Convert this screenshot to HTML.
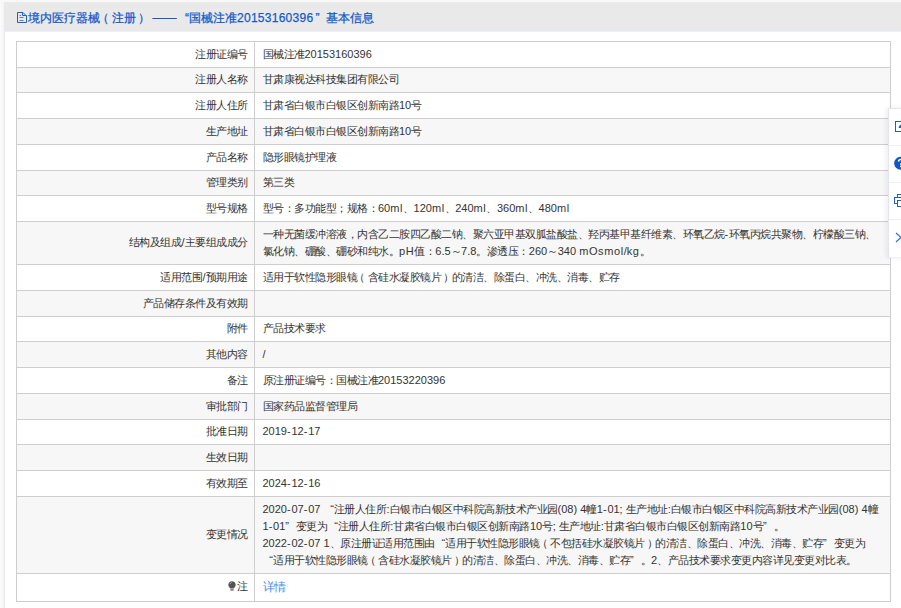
<!DOCTYPE html>
<html><head><meta charset="utf-8">
<style>
html,body{margin:0;padding:0;background:#f6f6f6;width:901px;height:608px;overflow:hidden;font-family:"Liberation Sans",sans-serif;}
i,b,u,s{font-style:normal;font-weight:normal;text-decoration:none;}
u{letter-spacing:0.8px;}
td s{letter-spacing:0.6px;}
#wrap{position:absolute;left:4px;top:2px;width:920px;height:640px;background:#fff;border-left:1px solid #e9e9e9;}
#lsh{position:absolute;left:0;top:0;width:4px;height:608px;background:linear-gradient(to right,#fbfbfb,#f4f4f4);}
#tsh{position:absolute;left:0;top:0;width:901px;height:2px;background:#f8f8f8;}
#hd{position:absolute;left:-1px;top:0;width:100%;height:29px;background:#e9e9e9;border-bottom:1px solid #eef0f7;}
#hd .t{position:absolute;left:24px;top:8.6px;font-size:12px;line-height:14px;color:#135ac9;white-space:nowrap;-webkit-text-stroke:0.25px #135ac9;}
#hd .t .lq{width:12px;}
#hd .t .rq{width:11px;padding-left:2px;}
#hd svg{position:absolute;left:13px;top:10px;}
#hd .t .dash{margin-left:4.5px;margin-right:0.5px;}
#hd .t i{letter-spacing:0.27px;}
table{position:absolute;left:16px;top:41px;border-collapse:collapse;table-layout:fixed;width:875px;font-size:11px;color:#333;letter-spacing:-0.5px;}
td{border:1px solid #cfcdd0;padding:0 7.5px;line-height:17.1px;white-space:nowrap;overflow:hidden;}
td i{letter-spacing:0;}
td.l{text-align:right;padding-right:6.5px;}
tr:nth-child(even) td{background:#f7f7f7;}
.lp{position:relative;left:-3px;}
.rp{position:relative;left:2px;}
.lq{display:inline-block;width:10.5px;text-align:right;letter-spacing:0;}
.rq{display:inline-block;width:10.5px;text-align:left;letter-spacing:0;}
tr.last{height:28px;}
#side{position:absolute;left:888px;top:108px;width:30px;height:148px;background:#fff;border-left:1px solid #e3e6ee;border-top:1px solid #e3e6ee;border-bottom:1px solid #eef0f4;box-shadow:-2px 0 5px rgba(0,0,0,0.07);}
#side .sep{position:absolute;left:0;width:100%;height:1px;background:#eceff4;}
a{color:#3d8ef0;text-decoration:none;font-size:12px;letter-spacing:-1px;}
.pin{display:inline-block;width:8px;height:10px;vertical-align:-1px;margin-right:1.5px;}
tr.last td.l{padding-top:2px;padding-bottom:4px;}
</style></head><body>
<div id="lsh"></div><div id="tsh"></div>
<div id="wrap">
 <div id="hd">
  <svg width="11" height="12" viewBox="0 0 11 12"><path d="M0.5 0.5H6L9.5 4V10.5H0.5Z" fill="none" stroke="#1f5fc2"/><path d="M5.5 0.5V3.5H9.5" fill="none" stroke="#1f5fc2"/><path d="M2.5 3.5H4M2.5 5.5H6.5M2.5 8.5H6.5" stroke="#5b7fd0"/></svg>
  <div class="t">境内医疗器械<b class="lp">（</b>注册<b class="rp">）</b><span class="dash">——</span><b class="lq">“</b>国械注准<i>20153160396</i><b class="rq">”</b>基本信息</div>
 </div>
</div>
<table>
<colgroup><col style="width:238px"><col></colgroup>
<tr style="height:26px"><td class="l">注册证编号</td><td>国械注准<i>20153160396</i></td></tr>
<tr style="height:25px"><td class="l">注册人名称</td><td>甘肃康视达科技集团有限公司</td></tr>
<tr style="height:26px"><td class="l">注册人住所</td><td>甘肃省白银市白银区创新南路<i>10</i>号</td></tr>
<tr style="height:26px"><td class="l">生产地址</td><td>甘肃省白银市白银区创新南路<i>10</i>号</td></tr>
<tr style="height:26px"><td class="l">产品名称</td><td>隐形眼镜护理液</td></tr>
<tr style="height:25px"><td class="l">管理类别</td><td>第三类</td></tr>
<tr style="height:26px"><td class="l">型号规格</td><td>型号：多功能型；规格：<i>60<s>ml</s></i>、<i>120<s>ml</s></i>、<i>240<s>ml</s></i>、<i>360<s>ml</s></i>、<i>480<s>ml</s></i></td></tr>
<tr style="height:43px"><td class="l">结构及组成<i>/</i>主要组成成分</td><td>一种无菌缓冲溶液，内含乙二胺四乙酸二钠、聚六亚甲基双胍盐酸盐、羟丙基甲基纤维素、环氧乙烷<i><u>-</u></i>环氧丙烷共聚物、柠檬酸三钠、<br>氯化钠、硼酸、硼砂和纯水。<i><s>pH</s></i>值：<i>6.5</i>～<i>7.8</i>。渗透压：<i>260</i>～<i>340 <s>mOsmol</s>/<s>kg</s></i>。</td></tr>
<tr style="height:26px"><td class="l">适用范围<i>/</i>预期用途</td><td>适用于软性隐形眼镜<b class="lp">（</b>含硅水凝胶镜片<b class="rp">）</b>的清洁、除蛋白、冲洗、消毒、贮存</td></tr>
<tr style="height:26px"><td class="l">产品储存条件及有效期</td><td></td></tr>
<tr style="height:25px"><td class="l">附件</td><td>产品技术要求</td></tr>
<tr style="height:26px"><td class="l">其他内容</td><td><i>/</i></td></tr>
<tr style="height:26px"><td class="l">备注</td><td>原注册证编号：国械注准<i>20153220396</i></td></tr>
<tr style="height:26px"><td class="l">审批部门</td><td>国家药品监督管理局</td></tr>
<tr style="height:25px"><td class="l">批准日期</td><td><i>2019<u>-</u>12<u>-</u>17</i></td></tr>
<tr style="height:26px"><td class="l">生效日期</td><td></td></tr>
<tr style="height:26px"><td class="l">有效期至</td><td><i>2024<u>-</u>12<u>-</u>16</i></td></tr>
<tr style="height:77px"><td class="l">变更情况</td><td><i>2020<u>-</u>07<u>-</u>07 </i><b class="lq">“</b>注册人住所<i>:</i>白银市白银区中科院高新技术产业园<i>(08) 4</i>幢<i>1<u>-</u>01; </i>生产地址<i>:</i>白银市白银区中科院高新技术产业园<i>(08) 4</i>幢<br><i>1<u>-</u>01</i><b class="rq">”</b>变更为<b class="lq">“</b>注册人住所<i>:</i>甘肃省白银市白银区创新南路<i>10</i>号<i>; </i>生产地址<i>:</i>甘肃省白银市白银区创新南路<i>10</i>号<b class="rq">”</b>。<br><i>2022<u>-</u>02<u>-</u>07 1</i>、原注册证适用范围由<b class="lq">“</b>适用于软性隐形眼镜<b class="lp">（</b>不包括硅水凝胶镜片<b class="rp">）</b>的清洁、除蛋白、冲洗、消毒、贮存<b class="rq">”</b>变更为<br><b class="lq">“</b>适用于软性隐形眼镜<b class="lp">（</b>含硅水凝胶镜片<b class="rp">）</b>的清洁、除蛋白、冲洗、消毒、贮存<b class="rq">”</b>。<i>2</i>、产品技术要求变更内容详见变更对比表。</td></tr>
<tr class="last"><td class="l"><svg class="pin" viewBox="0 0 8 10"><path d="M4 0.3C6.2 0.3 7.7 1.9 7.7 3.8C7.7 5.6 6.2 6.4 5.8 7.6H2.2C1.8 6.4 0.3 5.6 0.3 3.8C0.3 1.9 1.8 0.3 4 0.3Z" fill="#555"/><rect x="2.4" y="8.1" width="3.2" height="1.6" fill="#777"/><path d="M2.2 2.8Q2.5 1.7 3.6 1.5" stroke="#ccc" stroke-width="0.8" fill="none"/></svg>注</td><td><a>详情</a></td></tr>
</table>
<div id="side">
 <div class="sep" style="top:36px"></div><div class="sep" style="top:73px"></div><div class="sep" style="top:110px"></div>
</div>
<svg id="icons" width="20" height="160" viewBox="0 0 20 160" style="position:absolute;left:881px;top:100px">
 <rect x="14.5" y="21.5" width="10" height="10" fill="none" stroke="#1a5fd0"/>
 <path d="M17.6 27.8Q18 25.2 20.5 24.3L21 24.1V28H17.6Z" fill="#1a5fd0"/>
 <circle cx="19.6" cy="63.3" r="6.45" fill="#0f56c6"/>
 <path d="M17.5 61.6Q17.7 59.4 19.7 59.4Q21.8 59.5 21.8 61.3Q21.8 62.5 20.4 63.3Q19.7 63.7 19.7 64.7" fill="none" stroke="#fff" stroke-width="1.4"/>
 <rect x="19" y="65.6" width="1.5" height="1.5" fill="#fff"/>
 <rect x="13.5" y="97.5" width="12" height="6" fill="none" stroke="#1a5fd0"/>
 <rect x="16.5" y="94.5" width="8" height="3" fill="#fff" stroke="#1a5fd0"/>
 <rect x="16.5" y="100.5" width="8" height="6" fill="#fff" stroke="#1a5fd0"/>
 <path d="M15 133L20 137.5L15 142" fill="none" stroke="#2a6bd8" stroke-width="1.1"/>
</svg>
</body></html>
